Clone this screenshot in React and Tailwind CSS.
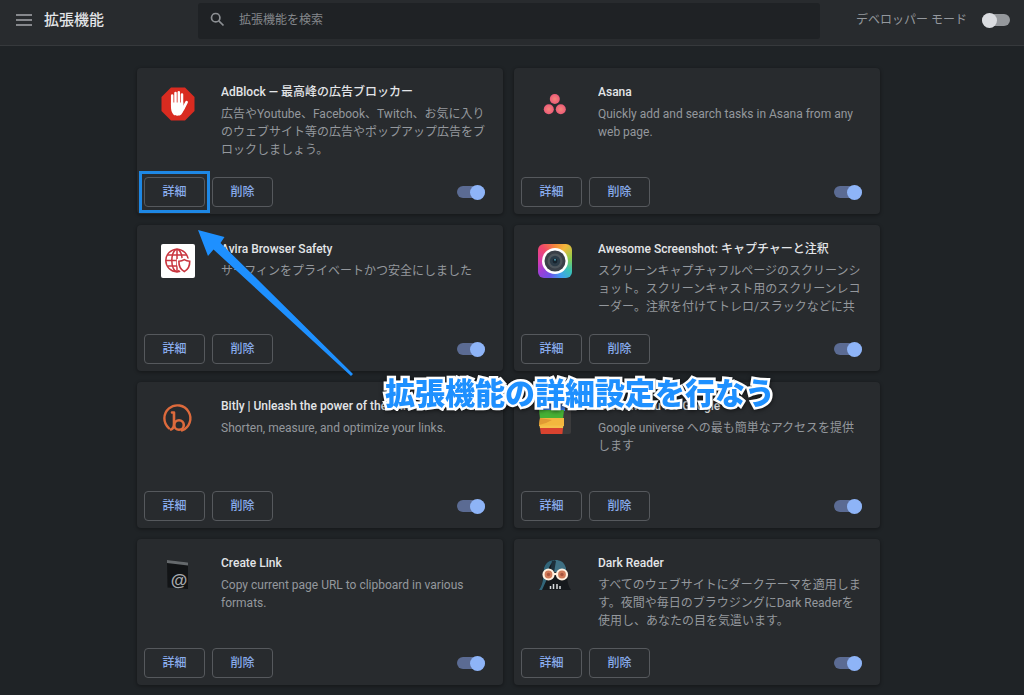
import React, { useState } from 'react';
import clsx from 'clsx';

// Extension icons
function AdBlockIcon() {
  return (
    <svg viewBox="0 0 34 34" className="size-[34px]" aria-hidden="true">
      <path d="M10 .5h14L33.500 10v14L24 33.500H10L.5 24V10z" fill="#d92b20" />
      <g stroke="#fff" strokeLinecap="round" fill="none">
        <path d="M11.200 18V8.600M14.500 17V5.900M17.800 17V5.300M21 18V7.600" strokeWidth="2.500" />
        <path d="M25.600 15.200L22 22" strokeWidth="2.700" />
      </g>
      <path d="M9.950 15.500h12.300v3.500l2.600-2c-.9 4-2.700 8.200-4.600 10.500-1.500 1.600-6.400 1.600-7.900 0-1.700-2-2.400-5-2.400-8z" fill="#fff" />
    </svg>
  );
}

function AsanaIcon() {
  return (
    <svg viewBox="0 0 34 34" className="size-[34px]" aria-hidden="true">
      <defs>
        <radialGradient id="asana">
          <stop offset="0" stopColor="#f4857a" />
          <stop offset="1" stopColor="#ec5b78" />
        </radialGradient>
      </defs>
      <g fill="url(#asana)">
        <circle cx="16.800" cy="12" r="5" />
        <circle cx="10.800" cy="22.200" r="5" />
        <circle cx="22.800" cy="22.200" r="5" />
      </g>
    </svg>
  );
}

function AviraIcon() {
  return (
    <svg viewBox="0 0 34 34" className="size-[34px]" aria-hidden="true">
      <rect width="34" height="34" rx="2" fill="#fff" />
      <g fill="none" stroke="#c9353f" strokeWidth="1.500">
        <circle cx="16" cy="16.500" r="11.200" />
        <ellipse cx="16" cy="16.500" rx="5.200" ry="11.200" />
        <path d="M16 5.300v22.400M6.500 11h19M4.800 16.500h22.400M6.500 22h19" />
      </g>
      <path d="M23.300 14.700c2 1.200 4 1.700 6 1.700.3 5.600-1.700 10-6 12.300-4.300-2.300-6.300-6.700-6-12.300 2 0 4-.5 6-1.700z" fill="#fff" stroke="#fff" strokeWidth="3" />
      <path d="M23.300 15.600c1.800 1.100 3.600 1.500 5.400 1.600.2 4.600-1.600 8.200-5.400 10.400-3.800-2.200-5.600-5.800-5.400-10.400 1.800-.1 3.600-.5 5.400-1.600z" fill="#fff" stroke="#c9353f" strokeWidth="1.600" />
    </svg>
  );
}

function AwesomeIcon() {
  return (
    <div className="flex size-[34px] items-center justify-center rounded-md bg-[conic-gradient(#f58a3a,#f3b83c_10%,#8fce4b_22%,#39c2b4_34%,#3f9ff0_44%,#6b55e8_55%,#9a3fd8_64%,#d83cae_75%,#f2486a_88%,#f58a3a)]">
      <svg viewBox="0 0 28 28" className="size-7" aria-hidden="true">
        <circle cx="14" cy="14" r="13" fill="#fff" />
        <circle cx="14" cy="14" r="10.500" fill="#3a4048" />
        <circle cx="14" cy="14" r="7.500" fill="#4e565c" />
        <circle cx="14" cy="14" r="5.200" fill="#2b3b47" />
        <circle cx="14" cy="14" r="2.400" fill="#16232d" />
        <circle cx="14" cy="12.700" r="1" fill="#4f9bb0" />
      </svg>
    </div>
  );
}

function BitlyIcon() {
  return (
    <svg viewBox="0 0 34 34" className="size-[34px]" aria-hidden="true">
      <g fill="none" stroke="#dd6a3c" strokeLinecap="round" strokeLinejoin="round">
        <path d="M8 27.300A13 13 0 1 1 21 29.500" strokeWidth="2.400" />
        <path d="M11 11.500h2V23q0 4.500-3 5.500" strokeWidth="2.600" />
        <circle cx="18" cy="24" r="4.800" strokeWidth="2.600" />
      </g>
    </svg>
  );
}

function BlackMenuIcon() {
  return (
    <svg viewBox="0 0 34 34" className="size-[34px]" aria-hidden="true">
      <rect x="2" y="2" width="31" height="31" rx="2" fill="#3b3b3c" />
      <path d="M2 3h25v7H1z" fill="#4285f4" />
      <path d="M1 9h25l-1 9H2z" fill="#46b035" />
      <path d="M2 17h24v8H1z" fill="#f3b73e" />
      <path d="M2 17l12 2-6 3-7 2z" fill="#e09a33" />
      <path d="M1.500 24.500h24l-.6 3H2z" fill="#f5c04a" />
      <path d="M2 27h23l-.6 6H3z" fill="#d9432f" />
    </svg>
  );
}

function CreateLinkIcon() {
  return (
    <svg viewBox="0 0 34 34" className="size-[34px]" aria-hidden="true">
      <path d="M6 2l21 2.500V31L6.500 29.500z" fill="#121416" />
      <path d="M6 2l21 2.500v3L6 5z" fill="#65696c" />
      <text x="18" y="28" textAnchor="middle" fontFamily="Liberation Sans, sans-serif" fontSize="17" fontWeight="700" fill="#a7aaad">@</text>
    </svg>
  );
}

function DarkReaderIcon() {
  return (
    <svg viewBox="0 0 34 34" className="size-[34px]" aria-hidden="true">
      <path d="M1 32C6 25 4 17 6 10 8 4 12 2 17 2s9 2 11 8c2 7 0 15 5 22z" fill="#15191d" />
      <path d="M1 32C6 25 5 17 6 10 8 4 12 2 17 2l-4 4c-3 4-4 9-4 15L4 32z" fill="#326579" />
      <path d="M17 2c6 0 9 2 11 8v4H14c0-5 1-9 3-12z" fill="#3f7083" />
      <path d="M14 2.500l4 .2-2 12h-4z" fill="#1d2f39" />
      <g fill="#d17b59" stroke="#fff0df" strokeWidth="2.200">
        <circle cx="10.500" cy="16.500" r="5" />
        <circle cx="24" cy="16.500" r="5" />
        <path d="M15.500 16h3.500" />
      </g>
      <g fill="#a8563f">
        <circle cx="10.500" cy="16.500" r="1.700" />
        <circle cx="24" cy="16.500" r="1.700" />
      </g>
      <path d="M12.500 28v3M15.500 26v5M19 26v5M22 28v3" stroke="#d8dcde" strokeWidth="1.500" />
    </svg>
  );
}

const extensions = [
  {
    id: 'adblock',
    name: 'AdBlock — 最高峰の広告ブロッカー',
    description: '広告やYoutube、Facebook、Twitch、お気に入り\nのウェブサイト等の広告やポップアップ広告をブ\nロックしましょう。',
    icon: <AdBlockIcon />,
    highlighted: true,
  },
  {
    id: 'asana',
    name: 'Asana',
    description: 'Quickly add and search tasks in Asana from any\nweb page.',
    icon: <AsanaIcon />,
  },
  {
    id: 'avira',
    name: 'Avira Browser Safety',
    description: 'サーフィンをプライベートかつ安全にしました',
    icon: <AviraIcon />,
  },
  {
    id: 'awesome-screenshot',
    name: 'Awesome Screenshot: キャプチャーと注釈',
    description: 'スクリーンキャプチャフルページのスクリーンシ\nョット。スクリーンキャスト用のスクリーンレコ\nーダー。注釈を付けてトレロ/スラックなどに共',
    icon: <AwesomeIcon />,
  },
  {
    id: 'bitly',
    name: 'Bitly | Unleash the power of the link',
    description: 'Shorten, measure, and optimize your links.',
    icon: <BitlyIcon />,
  },
  {
    id: 'black-menu',
    name: 'Black Menu for Google',
    description: 'Google universe への最も簡単なアクセスを提供\nします',
    icon: <BlackMenuIcon />,
  },
  {
    id: 'create-link',
    name: 'Create Link',
    description: 'Copy current page URL to clipboard in various\nformats.',
    icon: <CreateLinkIcon />,
  },
  {
    id: 'dark-reader',
    name: 'Dark Reader',
    description: 'すべてのウェブサイトにダークテーマを適用しま\nす。夜間や毎日のブラウジングにDark Readerを\n使用し、あなたの目を気遣います。',
    icon: <DarkReaderIcon />,
  },
];

function Toggle({ id, label, checked, onChange }) {
  return (
    <span className="relative flex h-[15px] w-7 items-center">
      <span className={clsx('h-3 w-full rounded-full', checked ? 'bg-[#5b6b93]' : 'bg-[#95989c]')} />
      <span
        className={clsx(
          'absolute top-0 size-[15px] rounded-full',
          checked ? 'right-0 bg-[#8eb4f7]' : 'left-0 bg-[#dadce0]'
        )}
      />
      <input
        id={id}
        type="checkbox"
        role="switch"
        aria-label={label}
        checked={checked}
        onChange={onChange}
        className="absolute inset-0 cursor-pointer opacity-0"
      />
    </span>
  );
}

function CardButton({ children, highlighted }) {
  return (
    <span className="relative flex">
      <button
        type="button"
        className="h-[30px] w-[61px] rounded-[4px] border border-[#56595d] pb-px text-xs font-medium text-[#88abec]"
      >
        {children}
      </button>
      {highlighted && (
        <span className="pointer-events-none absolute -inset-x-[5px] -inset-y-1.5 border-3 border-[#1e88e5]" />
      )}
    </span>
  );
}

function ExtensionCard({ extension }) {
  const [enabled, setEnabled] = useState(true);

  return (
    <article className="flex min-h-[146px] flex-col rounded-[4px] bg-[#282b2e] shadow-[0_1px_3px_1px_rgba(0,0,0,0.25)]">
      <div className="flex flex-1 gap-[26px] pt-[15px] pl-6">
        <div className="mt-1 flex-none">{extension.icon}</div>
        <div className="min-w-0 flex-1">
          <h2 className="truncate text-xs leading-[18px] font-medium text-[#e3e5e8]">{extension.name}</h2>
          <p className="mt-1 text-xs leading-[18px] whitespace-pre-line text-[#94989d]">{extension.description}</p>
        </div>
      </div>
      <div className="flex items-center gap-[7px] pr-[18px] pb-[7px] pl-[7px]">
        <CardButton highlighted={extension.highlighted}>詳細</CardButton>
        <CardButton>削除</CardButton>
        <div className="ml-auto">
          <Toggle
            id={extension.id}
            label={extension.name}
            checked={enabled}
            onChange={() => setEnabled(!enabled)}
          />
        </div>
      </div>
    </article>
  );
}

function Toolbar() {
  const [devMode, setDevMode] = useState(false);

  return (
    <header className="flex h-[46px] border-b border-[#36393c] bg-[#282b2e]">
      <div className="flex w-[198px] flex-none items-center gap-3 pb-[5px] pl-4">
        <button type="button" aria-label="メニュー" className="text-[#a5a8ac]">
          <svg viewBox="0 0 16 12" className="h-3 w-4" stroke="currentColor" strokeWidth="1.700" aria-hidden="true">
            <path d="M0 1h16M0 6h16M0 11h16" />
          </svg>
        </button>
        <h1 className="text-[15px] leading-5 font-medium text-[#e3e5e8]">拡張機能</h1>
      </div>
      <div className="mt-[3px] flex h-9 flex-1 items-center gap-3.5 rounded-[3px] bg-[#1f2225] pb-[3px] pl-3">
        <label htmlFor="search" aria-label="拡張機能を検索" className="text-[#8c8f93]">
          <svg viewBox="0 0 15 15" className="size-[15px]" fill="none" stroke="currentColor" strokeWidth="1.700" aria-hidden="true">
            <circle cx="5.700" cy="5.700" r="4.200" />
            <path d="M8.800 8.800l4.700 4.700" />
          </svg>
        </label>
        <input
          id="search"
          type="search"
          placeholder="拡張機能を検索"
          className="min-w-0 flex-1 bg-transparent text-xs text-[#e3e5e8] outline-none placeholder:text-[#84878b]"
        />
      </div>
      <div className="flex w-[204px] flex-none items-center justify-end gap-[15px] pr-3.5 pb-[5px]">
        <label htmlFor="dev-mode" className="text-xs text-[#94989d]">デベロッパー モード</label>
        <Toggle id="dev-mode" label="デベロッパー モード" checked={devMode} onChange={() => setDevMode(!devMode)} />
      </div>
    </header>
  );
}

// Arrow and caption pointing at the details button
function Annotation() {
  return (
    <div className="pointer-events-none absolute inset-0">
      <svg viewBox="0 0 156 148" className="absolute top-[161px] left-[60px] h-[148px] w-[156px]" aria-hidden="true">
        <path d="M1 1L27.500 8 23.500 14 156 145 154 147 16.500 20.500 11 27z" fill="#1e90ff" />
      </svg>
      <p className="absolute top-[304px] left-[248px] text-3xl leading-[44px] font-black whitespace-nowrap text-[#1e90ff] drop-shadow-[0_1px_2px_rgba(0,0,0,0.6)] [paint-order:stroke_fill] [-webkit-text-stroke:5px_white]">
        拡張機能の詳細設定を行なう
      </p>
    </div>
  );
}

function App() {
  return (
    <div lang="ja" className="min-h-screen bg-[#1f2326] font-[Roboto,'Noto_Sans_CJK_JP',sans-serif]">
      <Toolbar />
      <main className="pt-[22px] pr-[7px] pb-2">
        <div className="relative mx-auto grid max-w-[743px] grid-cols-2 gap-[11px]">
          {extensions.map((extension) => (
            <ExtensionCard key={extension.id} extension={extension} />
          ))}
          <Annotation />
        </div>
      </main>
    </div>
  );
}

export default App;
